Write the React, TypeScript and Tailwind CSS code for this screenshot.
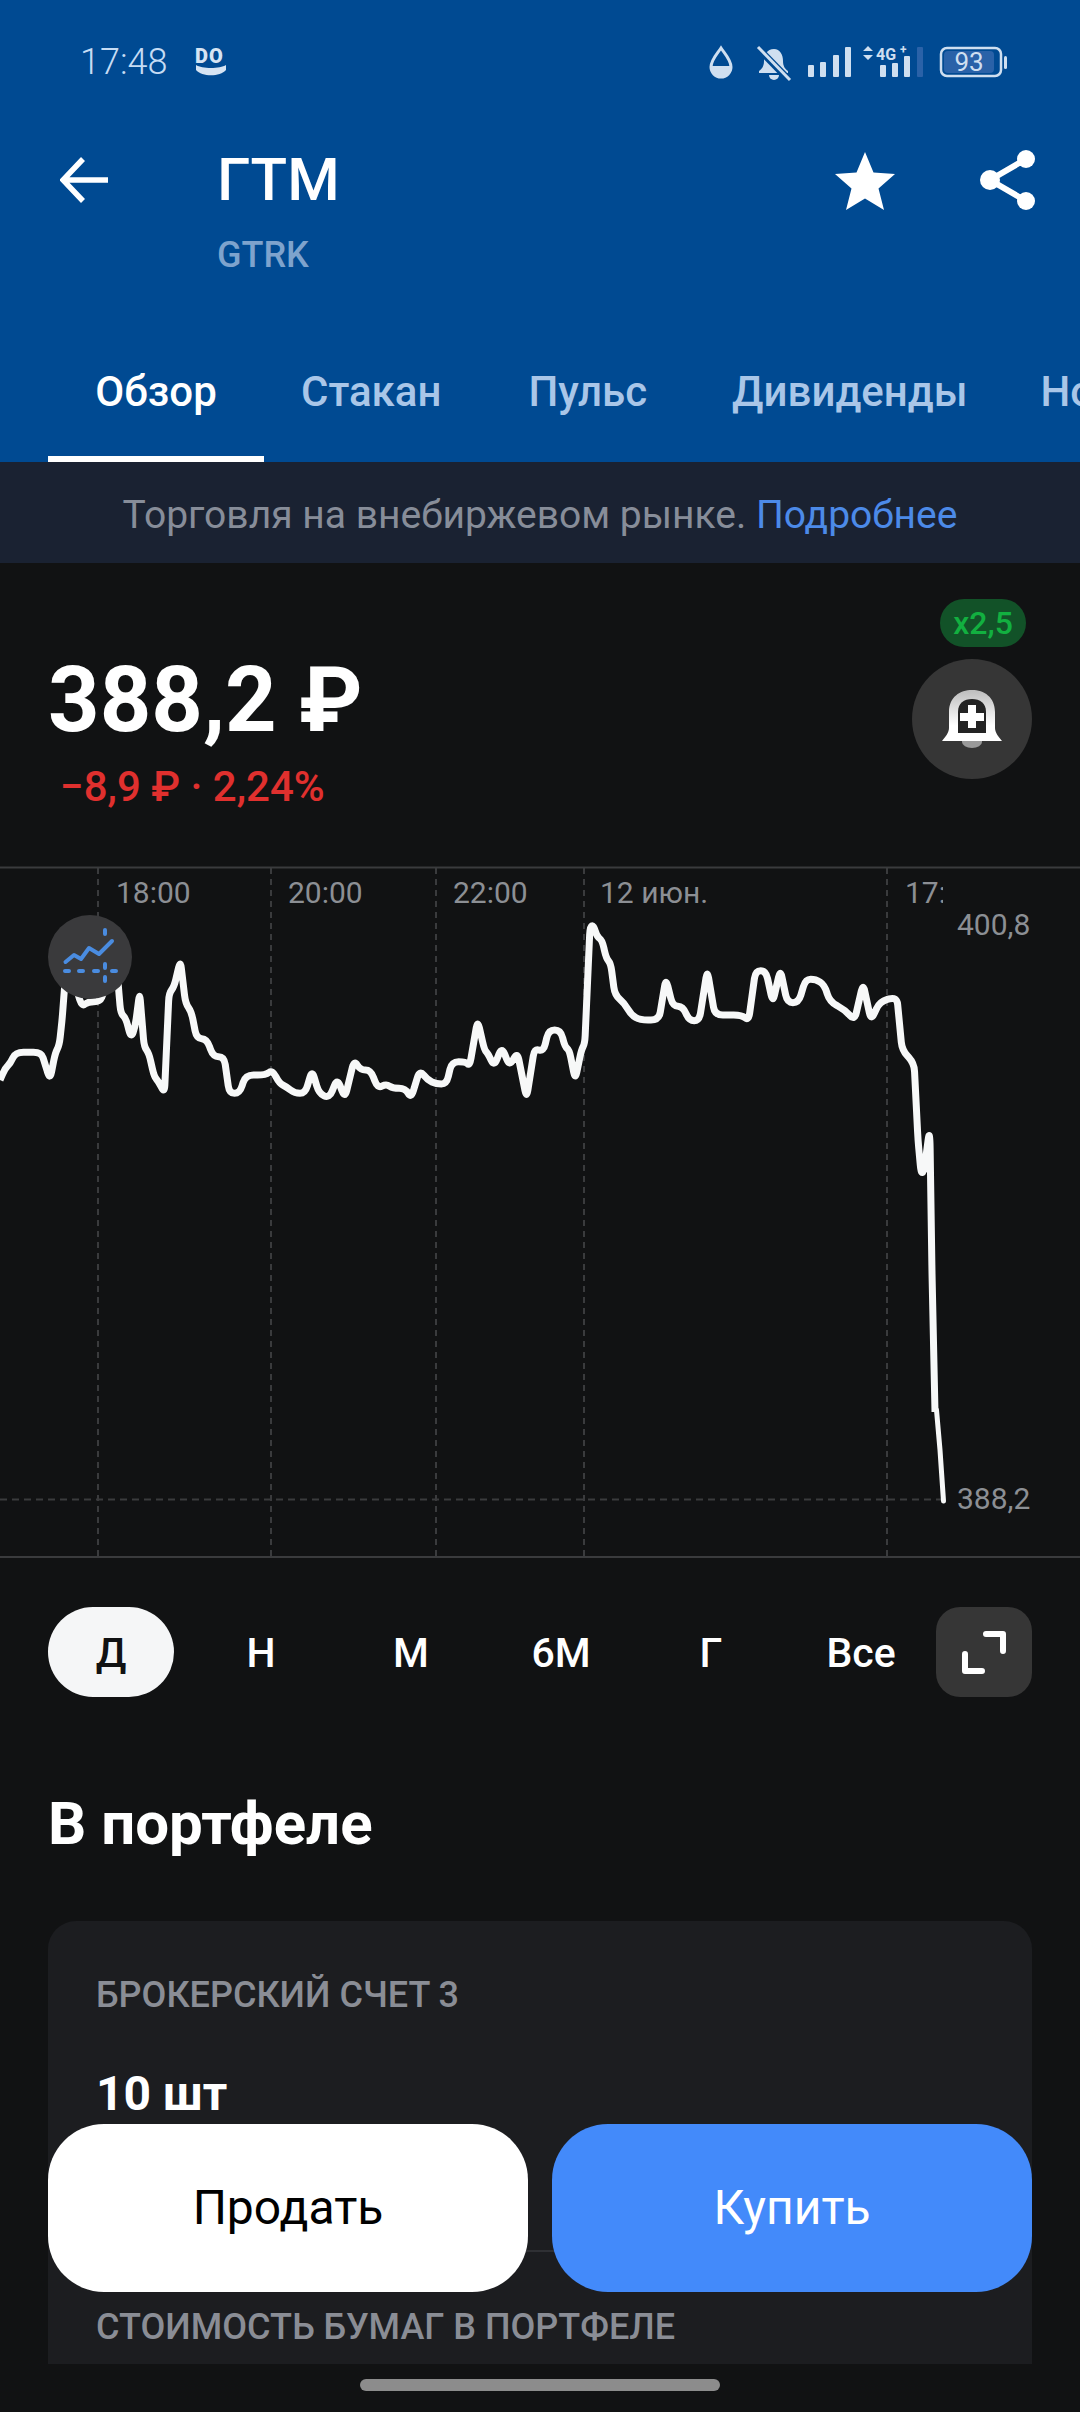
import React from "react";

const leftTrace = [
  [0, 660], [15, 625], [30, 610], [45, 577], [120, 577], [130, 610], [145, 660], [160, 580], [172, 555], [180, 480],
  [187, 385], [195, 300], [210, 330], [225, 400], [238, 440], [255, 425], [290, 425], [300, 400], [320, 300], [340, 340],
  [350, 460], [365, 475], [380, 535], [392, 500], [405, 397], [418, 560], [432, 580], [447, 650], [460, 665], [477, 700],
  [490, 400], [505, 380], [523, 300], [538, 430], [555, 455], [570, 535], [600, 537], [618, 590], [650, 590], [665, 700],
  [695, 700], [712, 645], [770, 645], [790, 630], [810, 670], [830, 680], [855, 700], [885, 700], [905, 630], [925, 700],
  [955, 715], [978, 655], [1000, 715], [1027, 600], [1045, 630], [1075, 630], [1095, 685], [1120, 672], [1140, 685], [1175, 685],
  [1192, 715], [1217, 630], [1240, 660], [1265, 672], [1295, 672], [1310, 605], [1350, 605], [1362, 618], [1385, 480], [1405, 570],
  [1415, 580], [1433, 620], [1455, 560], [1478, 620], [1500, 575], [1527, 715], [1550, 565],
];

const rightTrace = [
  [10, 575], [25, 510], [60, 510], [72, 560], [85, 570], [102, 660], [120, 570], [130, 550], [145, 200], [155, 195],
  [165, 230], [180, 240], [192, 295], [205, 310], [217, 405], [245, 430], [265, 465], [290, 480], [345, 480], [365, 355],
  [385, 438], [415, 440], [432, 482], [462, 482], [485, 330], [507, 465], [585, 465], [605, 482], [625, 332], [655, 332],
  [675, 428], [697, 328], [717, 428], [750, 428], [770, 358], [800, 358], [825, 375], [840, 425], [885, 450], [912, 482],
  [937, 370], [960, 482], [985, 425], [1035, 410], [1050, 570], [1085, 610],
];

const chartPoints: number[][] = [
  ...leftTrace.map(([x, y]) => [x / 2.9, 860 + y / 3]),
  ...rightTrace.map(([x, y]) => [540 + x / 2.9, 860 + y / 3]),
  [918, 1140], [921, 1173], [924, 1172], [929, 1133], [930, 1140], [932, 1273], [935, 1412],
];

// rounds every corner of the trace, the real chart line has soft peaks
function roundedPath(points: number[][], r: number) {
  let d = `M${points[0][0]} ${points[0][1]}`;
  for (let i = 1; i < points.length - 1; i++) {
    const [px, py] = points[i - 1];
    const [x, y] = points[i];
    const [nx, ny] = points[i + 1];
    const a = Math.hypot(x - px, y - py);
    const b = Math.hypot(nx - x, ny - y);
    const ra = Math.min(r, a / 2) / a;
    const rb = Math.min(r, b / 2) / b;
    d += `L${x - (x - px) * ra} ${y - (y - py) * ra}Q${x} ${y} ${x + (nx - x) * rb} ${y + (ny - y) * rb}`;
  }
  const last = points[points.length - 1];
  return d + `L${last[0]} ${last[1]}`;
}

const ranges = ["Д", "Н", "М", "6М", "Г", "Все"];

function StatusIcons() {
  return (
    <svg width="300" height="40" viewBox="708 42 300 40" fill="#cfdff0">
      <path d="M721 48c-4 6-10 12-10 19a10 10 0 0 0 20 0c0-7-6-13-10-19z" fill="none" stroke="#cfdff0" strokeWidth="3" />
      <path d="M710 66h22a11 11 0 0 1-22 0z" />
      <path d="M774 49c-7 0-10 6-10 12 0 5-2 8-5 10v2h29v-2c-3-2-5-5-5-10 0-6-3-12-9-12z" />
      <path d="M769 75h10a5 5 0 0 1-10 0z" />
      <path d="M757 47l32 33" stroke="#004a92" strokeWidth="7" />
      <path d="M758 47l32 33" stroke="#cfdff0" strokeWidth="3" />
      <rect x="808" y="65" width="6" height="12" rx="1" />
      <rect x="820" y="62" width="6" height="15" rx="1" />
      <rect x="833" y="55" width="6" height="22" rx="1" />
      <rect x="845" y="47" width="6" height="30" rx="1" />
      <path d="M868 46l5 5h-10zM868 60l5-5h-10z" />
      <text x="876" y="60" fontSize="16" fontWeight="700" fontFamily="Roboto, sans-serif">4G</text>
      <text x="900" y="54" fontSize="12" fontWeight="700" fontFamily="Roboto, sans-serif">+</text>
      <rect x="880" y="65" width="6" height="12" rx="1" />
      <rect x="892" y="63" width="6" height="14" rx="1" />
      <rect x="904" y="56" width="6" height="21" rx="1" />
      <rect x="917" y="47" width="6" height="30" rx="1" fill="#2a62a8" />
      <rect x="941" y="48" width="60" height="28" rx="6" fill="none" stroke="#cfdff0" strokeWidth="2.5" />
      <rect x="944" y="51" width="50" height="22" rx="4" fill="#2a62a8" />
      <rect x="1004" y="56" width="3" height="13" rx="1.5" />
      <text x="969" y="71" fontSize="26" textAnchor="middle" fontFamily="Roboto, sans-serif">93</text>
    </svg>
  );
}

export default function App() {
  return (
    <div className="relative w-[1080px] h-[2412px] overflow-hidden bg-[#111213] font-['Roboto',sans-serif] text-white">
      {/* Blue header */}
      <div className="h-[462px] bg-[#004a92] flex flex-col">
        <div className="h-[124px] shrink-0 flex items-center justify-between pl-[80px] pr-[72px]">
          <div className="flex items-center gap-[28px]">
            <span className="text-[36px] font-light text-[#c6dcf4] leading-none">17:48</span>
            <svg width="32" height="28" viewBox="0 0 32 28" fill="none" className="overflow-visible">
              <text x="0" y="15" fontSize="20" fontWeight="900" letterSpacing="1" fill="#d6e4f3" fontFamily="Roboto, sans-serif">DO</text>
              <path d="M1 17c6 4 24 4 30 0v5c-6 7-24 7-30 0z" fill="#d6e4f3" />
            </svg>
          </div>
          <StatusIcons />
        </div>

        <div className="flex items-start pt-[21px] pl-[60px] pr-[44px]">
          <svg width="48" height="46" viewBox="0 0 48 46" fill="none" className="mt-[12px] shrink-0">
            <path d="M48 23H4M23 2L3 23l20 21" stroke="#fff" strokeWidth="5.5" />
          </svg>
          <div className="ml-[109px] flex-1">
            <div className="text-[60px] font-medium leading-[70px]">ГТМ</div>
            <div className="text-[36px] font-medium leading-[42px] mt-[19px] text-[#7ea3cd]">GTRK</div>
          </div>
          <svg width="60" height="58" viewBox="0 0 60 58" fill="#fff" className="mt-[7px] shrink-0">
            <path d="M30 0l8.5 20.5L60 22 43.5 36.5 49 58 30 46.5 11 58l5.500-21.500L0 22l21.500-1.500z" />
          </svg>
          <svg width="56" height="62" viewBox="0 0 56 62" fill="none" className="ml-[85px] mt-[4px] shrink-0">
            <path d="M46 10L10 31l36 21" stroke="#fff" strokeWidth="6" />
            <circle cx="46" cy="10" r="9" fill="#fff" />
            <circle cx="10" cy="31" r="10" fill="#fff" />
            <circle cx="46" cy="52" r="9" fill="#fff" />
          </svg>
        </div>

        <div className="mt-auto h-[116px] shrink-0 flex items-stretch whitespace-nowrap text-[42px] font-medium text-[#a9c6e8] overflow-hidden">
          <div className="ml-[48px] w-[216px] shrink-0 flex items-center justify-center text-white border-b-[6px] border-white pb-[20px]">Обзор</div>
          <div className="ml-[37px] shrink-0 flex items-center pb-[26px]">Стакан</div>
          <div className="ml-[87px] shrink-0 flex items-center pb-[26px]">Пульс</div>
          <div className="ml-[85px] shrink-0 flex items-center pb-[26px]">Дивиденды</div>
          <div className="ml-[73px] shrink-0 flex items-center pb-[26px]">Новости</div>
        </div>
      </div>

      {/* Otc banner */}
      <div className="h-[101px] bg-[#1a2232] flex items-center justify-center pt-[5px] text-[39px] text-[#878d99] whitespace-nowrap">
        <span>Торговля на внебиржевом рынке.&nbsp;</span>
        <span className="text-[#4c8ae8]">Подробнее</span>
      </div>

      {/* Price block */}
      <div className="h-[303px] flex justify-between pl-[48px] pr-[48px]">
        <div className="pt-[86px]">
          <div className="text-[90px] font-bold leading-[104px] whitespace-nowrap">388,2 ₽</div>
          <div className="mt-[10px] ml-[12px] text-[42px] font-medium text-[#e0302e] leading-[48px] whitespace-nowrap">−8,9 ₽ · 2,24%</div>
        </div>
        <div className="flex flex-col items-end pt-[36px]">
          <div className="w-[86px] h-[48px] mr-[6px] rounded-full bg-[#125228] text-[#12b040] text-[32px] font-medium flex items-center justify-center">x2,5</div>
          <div className="mt-[12px] w-[120px] h-[120px] rounded-full bg-[#363636] flex items-center justify-center">
            <svg width="60" height="58" viewBox="942 690 60 58" fill="none">
              <defs>
                <linearGradient id="bellDome" x1="0" y1="0" x2="0" y2="1">
                  <stop offset="0" stopColor="#bdbdbd" />
                  <stop offset="0.7" stopColor="#ffffff" />
                </linearGradient>
              </defs>
              <path d="M949 728V712C949 697 960 690 972 690S995 697 995 712V728C995 733 999 737 1002 741H942C945 737 949 733 949 728z" fill="url(#bellDome)" />
              <path d="M958 733V712C958 703 964 699 972 699S986 703 986 712V733z" fill="#232323" />
              <path d="M968 705h8v8h8v8h-8v7h-8v-7h-8v-8h8z" fill="#fff" />
              <path d="M962 741h20v1a10 6 0 0 1-20 0z" fill="#9a9a9a" />
            </svg>
          </div>
        </div>
      </div>

      {/* Chart */}
      <div className="relative h-[692px] text-[30px] text-[#8c8f94]">
        <svg className="absolute inset-0" width="1080" height="692" viewBox="0 866 1080 692" fill="none">
          <path d="M0 867.500H1080M0 1557H1080" stroke="#3a3b3d" strokeWidth="2" />
          {[98, 271, 436, 584, 887].map((x) => (
            <path key={x} d={`M${x} 868V1556`} stroke="#3a3b3d" strokeWidth="2" strokeDasharray="6 5" />
          ))}
          <path d="M0 1499.500H944" stroke="#3a3b3d" strokeWidth="2" strokeDasharray="7 5" />
          <path d={roundedPath(chartPoints, 8)} stroke="#f7f8f8" strokeWidth="7" strokeLinejoin="round" />
          <path d="M936.500 1410L940 1450L943.500 1501" stroke="#f7f8f8" strokeWidth="5" strokeLinecap="round" strokeLinejoin="round" />
        </svg>

        <span className="absolute left-[116px] top-[9px] leading-[36px]">18:00</span>
        <span className="absolute left-[288px] top-[9px] leading-[36px]">20:00</span>
        <span className="absolute left-[453px] top-[9px] leading-[36px]">22:00</span>
        <span className="absolute left-[600px] top-[9px] leading-[36px]">12 июн.</span>
        <span className="absolute left-[905px] top-[9px] leading-[36px] w-[38px] overflow-hidden whitespace-nowrap">17:00</span>
        <span className="absolute left-[957px] top-[41px] leading-[36px]">400,8</span>
        <span className="absolute left-[957px] top-[615px] leading-[36px]">388,2</span>

        <div className="absolute left-[48px] top-[49px] w-[84px] h-[84px] rounded-full bg-[#3a3a3c] flex items-center justify-center">
          <svg width="60" height="60" viewBox="60 928 60 60" fill="none" stroke="#4a8ce0" strokeWidth="4" strokeLinecap="round" strokeLinejoin="round">
            <path d="M65.500 963L74 956L81 960L89 949L99 955L112 942" />
            <path d="M65 972h4M79 972h4M94 972h4M112 972h4M105 931v4M105 965v4M105 978v4" />
          </svg>
        </div>
      </div>

      {/* Range switcher */}
      <div className="mt-[49px] h-[90px] flex items-center pl-[48px] pr-[48px]">
        <div className="flex flex-1 text-[41px] font-medium">
          {ranges.map((label, i) => (
            <div
              key={label}
              className={
                i === 0
                  ? "w-[126px] h-[90px] pt-[4px] rounded-full bg-[#f5f6f7] text-[#111213] flex items-center justify-center mr-[24px]"
                  : "w-[126px] h-[90px] pt-[4px] flex items-center justify-center mr-[24px] last:mr-0"
              }
            >
              {label}
            </div>
          ))}
        </div>
        <div className="w-[96px] h-[90px] rounded-[24px] bg-[#363636] flex items-center justify-center shrink-0">
          <svg width="44" height="44" viewBox="0 0 44 44" fill="none" stroke="#fff" strokeWidth="6" strokeLinecap="round" strokeLinejoin="round">
            <path d="M24 4h17v17M3 24v17h17" />
          </svg>
        </div>
      </div>

      {/* Portfolio */}
      <div className="px-[48px]">
        <h2 className="mt-[95px] text-[60px] font-bold leading-[64px]">В портфеле</h2>
        <div className="mt-[65px] h-[480px] rounded-[28px] bg-[#1c1d20] px-[48px] pt-[54px]">
          <div className="text-[36px] font-medium leading-[40px] text-[#8a8d95]">БРОКЕРСКИЙ СЧЕТ 3</div>
          <div className="mt-[52px] text-[48px] font-bold leading-[54px]">10 шт</div>
          <div className="mt-[129px] h-[2px] bg-[#2f3034]" />
          <div className="mt-[55px] text-[36px] font-medium leading-[40px] text-[#8a8d95] whitespace-nowrap">СТОИМОСТЬ БУМАГ В ПОРТФЕЛЕ</div>
        </div>
      </div>

      {/* Sticky actions */}
      <div className="absolute left-[48px] right-[48px] top-[2124px] flex gap-[24px] text-[48px]">
        <button className="flex-1 h-[168px] rounded-[56px] bg-white text-black">Продать</button>
        <button className="flex-1 h-[168px] rounded-[56px] bg-[#438afa] text-white">Купить</button>
      </div>

      {/* Gesture bar */}
      <div className="absolute inset-x-0 bottom-0 h-[48px] bg-[#111213] flex justify-center pt-[15px]">
        <div className="w-[360px] h-[12px] rounded-full bg-[#8c8c8c]" />
      </div>
    </div>
  );
}
